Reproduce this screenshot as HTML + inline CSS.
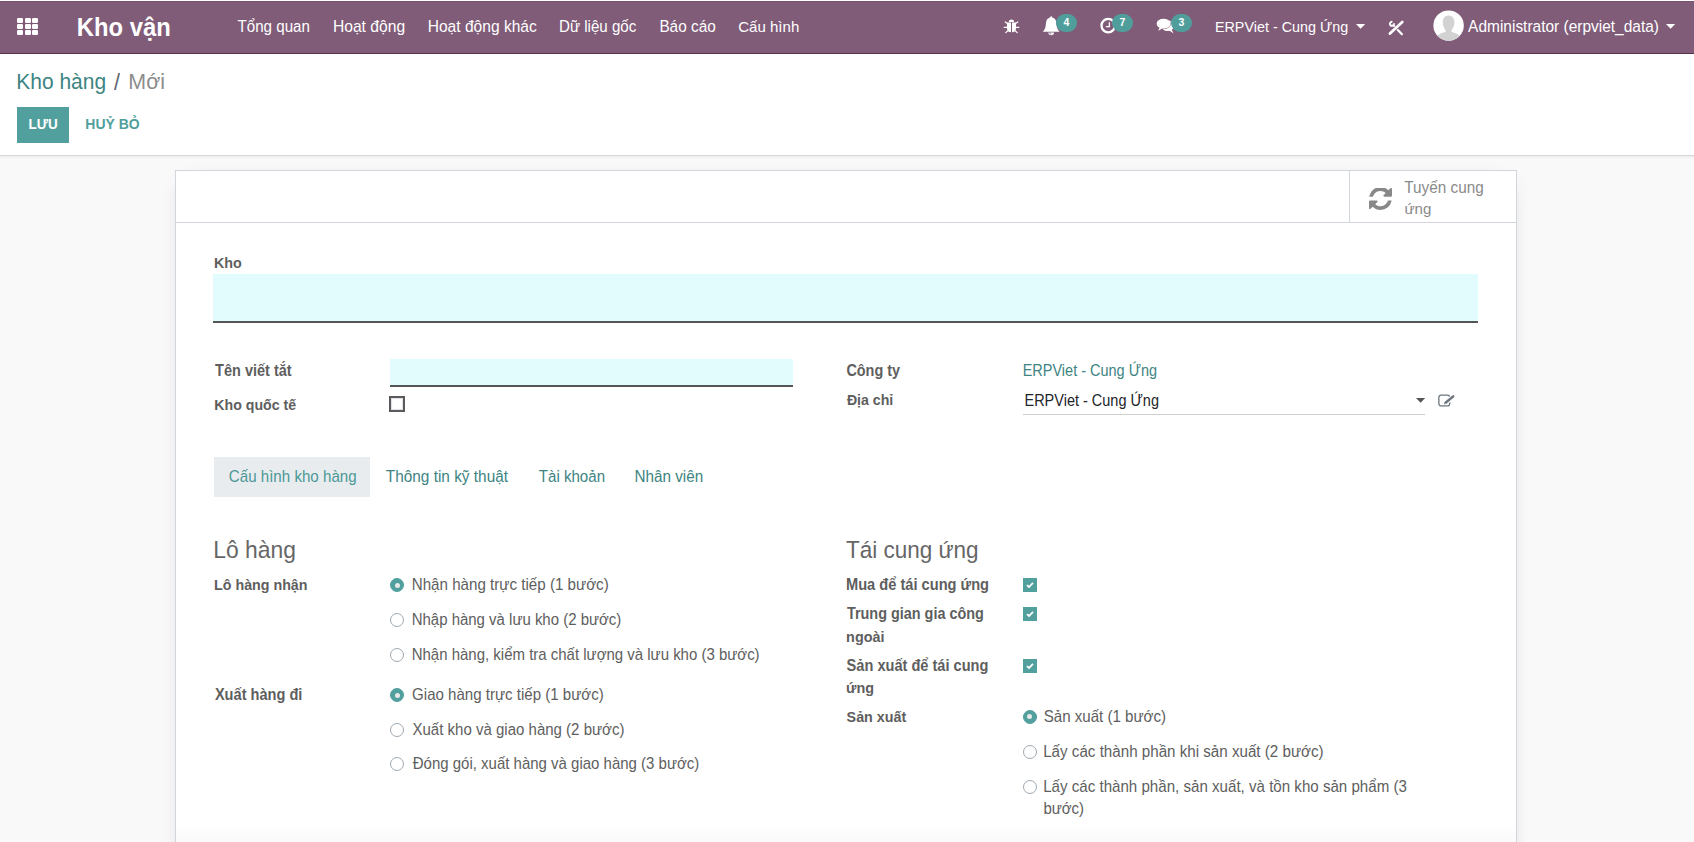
<!DOCTYPE html>
<html lang="vi">
<head>
<meta charset="utf-8">
<title>Kho hàng - Mới</title>
<style>
html,body{margin:0;padding:0;}
body{width:1694px;height:842px;overflow:hidden;position:relative;background:#f9f9f9;font-family:"Liberation Sans",sans-serif;}
.t{position:absolute;white-space:nowrap;line-height:1;font-family:"Liberation Sans",sans-serif;}
.abs{position:absolute;}
#nav{position:absolute;left:0;top:1px;width:1694px;height:51px;background:#805c78;border-top:1px solid #7a5170;border-bottom:1px solid #56324e;box-sizing:content-box;}
#cp{position:absolute;left:0;top:54px;width:1694px;height:101px;background:#fff;border-bottom:1px solid #d6d6d6;}
#cpshadow{position:absolute;left:0;top:156px;width:1694px;height:3px;background:linear-gradient(#ededed,#f9f9f9);}
#sheet{position:absolute;left:175px;top:170px;width:1340px;height:700px;background:#fff;border:1px solid #d1d6dc;box-shadow:0 5px 20px -12px rgba(0,0,0,0.35);}
.badge{position:absolute;width:21px;height:18px;border-radius:9px;background:#4f9e9c;}
.cell{position:absolute;width:6px;height:4.6px;background:#fff;border-radius:1.2px;}
.radio{position:absolute;width:12.4px;height:12.4px;border:1px solid #9fa8b1;border-radius:50%;background:#fff;}
.radio.on{background:#52a09e;border-color:#52a09e;}
.radio.on::after{content:"";position:absolute;left:3.7px;top:3.7px;width:5px;height:5px;border-radius:50%;background:#e8e8e8;}
.chk{position:absolute;width:14px;height:14px;background:#52a09e;}
</style>
</head>
<body>
<div class="abs" style="left:0;top:0;width:1694px;height:1px;background:#fff"></div>
<div id="nav"></div>
<!-- apps grid -->
<div class="cell" style="left:17px;top:18px"></div><div class="cell" style="left:24.5px;top:18px"></div><div class="cell" style="left:32px;top:18px"></div>
<div class="cell" style="left:17px;top:24px"></div><div class="cell" style="left:24.5px;top:24px"></div><div class="cell" style="left:32px;top:24px"></div>
<div class="cell" style="left:17px;top:30.2px"></div><div class="cell" style="left:24.5px;top:30.2px"></div><div class="cell" style="left:32px;top:30.2px"></div>

<!-- bug icon -->
<svg class="abs" style="left:1000px;top:14px" width="24" height="24" viewBox="0 0 24 24">
  <path d="M8.8 8 A2.65 2.6 0 0 1 14.1 8 Z" fill="#fff"/>
  <path d="M7 8.6 H11 V18.2 C8.6 18.2 7 16.8 7 14.2 Z M12 8.6 H16 V14.2 C16 16.8 14.4 18.2 12 18.2 Z" fill="#fff"/>
  <path d="M7.4 9.6 L5.2 8 M15.6 9.6 L17.8 8 M4.2 13.4 H7.2 M15.8 13.4 H18.8 M7.8 16.8 L5.8 18.6 M15.2 16.8 L17.2 18.6" stroke="#fff" stroke-width="1.2" fill="none" stroke-linecap="round"/>
</svg>
<!-- bell -->
<svg class="abs" style="left:1042px;top:16px" width="19" height="20" viewBox="0 0 19 20">
  <circle cx="9.2" cy="1.2" r="1" fill="#fff"/>
  <path d="M9.2 1.4 C6.2 1.4 4.6 3.2 4.2 5.8 L3.6 10.2 C3.2 12.8 2 14.4 0.8 15.7 H17.6 C16.4 14.4 15.2 12.8 14.8 10.2 L14.2 5.8 C13.8 3.2 12.2 1.4 9.2 1.4 Z" fill="#fff"/>
  <path d="M6.4 16.4 A2.8 2.8 0 0 0 12 16.4 Z" fill="#fff"/>
  <path d="M7.6 16.4 A1.6 1.6 0 0 0 9.4 18" stroke="#805c78" stroke-width="0.7" fill="none"/>
</svg>
<div class="badge" style="left:1056px;top:14px"></div>
<!-- clock -->
<svg class="abs" style="left:1100px;top:17px" width="17" height="17" viewBox="0 0 17 17">
  <circle cx="8.2" cy="8.6" r="6.7" stroke="#fff" stroke-width="2.3" fill="none"/>
  <path d="M9.4 5.2 V9.6 H5.9" stroke="#fff" stroke-width="1.3" fill="none"/>
</svg>
<div class="badge" style="left:1112px;top:14px"></div>
<!-- comments -->
<svg class="abs" style="left:1156px;top:18px" width="20" height="18" viewBox="0 0 20 18">
  <ellipse cx="11.6" cy="7.6" rx="6.4" ry="5.4" fill="#fff"/>
  <path d="M12.5 12 L17.6 15.6 L15.4 11 Z" fill="#fff"/>
  <ellipse cx="7.57" cy="5.8" rx="7.3" ry="5.4" fill="#805c78"/>
  <path d="M2 12.9 L3.6 9.4 L6.6 10.6 Z" fill="#805c78" stroke="#805c78" stroke-width="1.2"/>
  <ellipse cx="7.57" cy="5.8" rx="6.95" ry="5.0" fill="#fff"/>
  <path d="M2.2 12.8 L3.6 9.6 L6.4 10.6 Z" fill="#fff"/>
</svg>
<div class="badge" style="left:1171px;top:14px"></div>
<!-- caret company -->
<svg class="abs" style="left:1356px;top:23.5px" width="10" height="5" viewBox="0 0 10 5"><path d="M0 0 H9.2 L4.6 4.8 Z" fill="#fff"/></svg>
<!-- tools -->
<svg class="abs" style="left:1384px;top:16px" width="24" height="24" viewBox="0 0 24 24">
  <path d="M9.6 9.6 L17.9 18.2" stroke="#fff" stroke-width="2.2" stroke-linecap="round" fill="none"/>
  <path d="M9.83 7.28 A2.0 2.0 0 1 1 8.42 5.87" stroke="#fff" stroke-width="1.9" fill="none"/>
  <path d="M5.9 17.6 L18.3 5.9" stroke="#805c78" stroke-width="4" stroke-linecap="round" fill="none"/>
  <path d="M5.9 17.6 L18.3 5.9" stroke="#fff" stroke-width="2.7" stroke-linecap="round" fill="none"/>
  <path d="M4.9 18.9 L5.0 16.8 L7.0 18.6 Z" fill="#fff"/>
</svg>
<!-- avatar -->
<svg class="abs" style="left:1433px;top:10px" width="32" height="32" viewBox="0 0 32 32">
  <defs><clipPath id="avc"><circle cx="15.6" cy="15.6" r="15.2"/></clipPath></defs>
  <circle cx="15.6" cy="15.6" r="15.2" fill="#fff"/>
  <g clip-path="url(#avc)" fill="#d2d2d2">
    <path d="M15.6 5.6 C19.2 5.6 21.4 8.4 21.4 12.6 C21.4 16 20 18.6 18.6 20 L18.6 22 C22 22.8 26.4 24.2 27.6 27 L27.6 34 H3.6 V27 C4.8 24.2 9.2 22.8 12.6 22 L12.6 20 C11.2 18.6 9.8 16 9.8 12.6 C9.8 8.4 12 5.6 15.6 5.6 Z"/>
  </g>
</svg>
<!-- caret user -->
<svg class="abs" style="left:1666px;top:23.5px" width="10" height="5" viewBox="0 0 10 5"><path d="M0 0 H9.2 L4.6 4.8 Z" fill="#fff"/></svg>

<div id="cp"></div>
<div id="cpshadow"></div>
<div class="abs" style="left:17px;top:107px;width:52px;height:36px;background:#52a09e"></div>

<div id="sheet"></div>
<div class="abs" style="left:176px;top:222px;width:1340px;height:1px;background:#d1d6dc"></div>
<div class="abs" style="left:1349px;top:171px;width:1px;height:51px;background:#d1d6dc"></div>
<!-- refresh icon -->
<svg class="abs" style="left:1369px;top:188px" width="23" height="23" viewBox="0 0 1536 1536">
  <g transform="translate(0,-64)">
  <path fill="#888" d="M1511 928q0 5-1 7-64 268-268 434.5t-478 166.5q-146 0-282.5-55t-243.5-157l-129 129q-19 19-45 19t-45-19-19-45v-448q0-26 19-45t45-19h448q26 0 45 19t19 45-19 45l-137 137q71 66 161 102t187 36q134 0 250-65t186-179q11-17 53-117 8-23 30-23h192q13 0 22.5 9.5t9.5 22.5zm25-800v448q0 26-19 45t-45 19h-448q-26 0-45-19t-19-45 19-45l138-138q-148-137-349-137-134 0-250 65t-186 179q-11 17-53 117-8 23-30 23h-199q-13 0-22.5-9.5t-9.5-22.5v-7q65-268 270-434.5t480-166.5q146 0 284 55.5t245 156.5l130-129q19-19 45-19t45 19 19 45z"/>
  </g>
</svg>

<!-- Kho input -->
<div class="abs" style="left:213px;top:274px;width:1265px;height:47px;background:#e2fcfd;border-bottom:2px solid #555"></div>
<!-- Ten viet tat input -->
<div class="abs" style="left:390px;top:359px;width:403px;height:26px;background:#e2fcfd;border-bottom:2px solid #555"></div>
<!-- checkbox empty -->
<div class="abs" style="left:389px;top:396px;width:12px;height:12px;border:2px solid #5a5a5a;box-shadow:inset 0 0 1px 1px #dde2e8;background:#fff"></div>
<!-- dia chi underline + caret + edit -->
<div class="abs" style="left:1023px;top:414px;width:402px;height:1px;background:#cfcfcf"></div>
<svg class="abs" style="left:1416px;top:398px" width="10" height="5" viewBox="0 0 10 5"><path d="M0 0 H9.2 L4.6 4.8 Z" fill="#555"/></svg>
<svg class="abs" style="left:1437px;top:394px" width="18" height="14" viewBox="0 0 18 14">
  <rect x="1.85" y="1.15" width="10.8" height="10.8" rx="2.2" stroke="#6c757d" stroke-width="1.3" fill="none"/>
  <path d="M7.9 9.4 L16.4 2.2" stroke="#fff" stroke-width="4.6" fill="none"/>
  <path d="M8.6 8.8 L16.2 2.4" stroke="#6c757d" stroke-width="2.5" fill="none" stroke-linecap="round"/>
  <path d="M6.8 10.6 L7.6 7.9 L9.5 9.7 Z" fill="#6c757d"/>
  <path d="M7.5 9.9 L7.9 8.7 L8.8 9.5 Z" fill="#fff"/>
</svg>

<!-- tabs -->
<div class="abs" style="left:213.5px;top:457px;width:156.5px;height:39.5px;background:#e9ecef"></div>

<!-- radios -->
<div class="radio on" style="left:390px;top:578px"></div>
<div class="radio" style="left:390px;top:612.8px"></div>
<div class="radio" style="left:390px;top:647.5px"></div>
<div class="radio on" style="left:390px;top:688px"></div>
<div class="radio" style="left:390px;top:722.5px"></div>
<div class="radio" style="left:390px;top:757px"></div>
<div class="radio on" style="left:1022.8px;top:709.8px"></div>
<div class="radio" style="left:1022.8px;top:745px"></div>
<div class="radio" style="left:1022.8px;top:780px"></div>
<!-- checkboxes -->
<div class="chk" style="left:1023px;top:578px"></div>
<div class="chk" style="left:1023px;top:607px"></div>
<div class="chk" style="left:1023px;top:659px"></div>
<svg class="abs" style="left:1023px;top:578px" width="14" height="14" viewBox="0 0 14 14"><path d="M4 7.2 L6 9 L10 4.8" stroke="#fff" stroke-width="1.8" fill="none"/></svg>
<svg class="abs" style="left:1023px;top:607px" width="14" height="14" viewBox="0 0 14 14"><path d="M4 7.2 L6 9 L10 4.8" stroke="#fff" stroke-width="1.8" fill="none"/></svg>
<svg class="abs" style="left:1023px;top:659px" width="14" height="14" viewBox="0 0 14 14"><path d="M4 7.2 L6 9 L10 4.8" stroke="#fff" stroke-width="1.8" fill="none"/></svg>

<span class="t" style="left:76.8px;top:16px;font-size:23.8px;font-weight:700;color:#ffffff;transform:scaleY(1.1);transform-origin:0 20px;">Kho vận</span>
<span class="t" style="left:237.5px;top:19px;font-size:15.15px;color:#ffffff;transform:scaleY(1.03);transform-origin:0 13px;">Tổng quan</span>
<span class="t" style="left:332.9px;top:19px;font-size:15.66px;color:#ffffff;transform:scaleY(1.03);transform-origin:0 13px;">Hoạt động</span>
<span class="t" style="left:427.7px;top:19px;font-size:15.59px;color:#ffffff;transform:scaleY(1.03);transform-origin:0 13px;">Hoạt động khác</span>
<span class="t" style="left:559.0px;top:19px;font-size:15.11px;color:#ffffff;transform:scaleY(1.03);transform-origin:0 13px;">Dữ liệu gốc</span>
<span class="t" style="left:659.4px;top:19px;font-size:15.35px;color:#ffffff;transform:scaleY(1.03);transform-origin:0 13px;">Báo cáo</span>
<span class="t" style="left:738.2px;top:19px;font-size:15.06px;color:#ffffff;transform:scaleY(1.03);transform-origin:0 13px;">Cấu hình</span>
<span class="t" style="left:1214.9px;top:20px;font-size:14.37px;color:#ffffff;transform:scaleY(1.03);transform-origin:0 12px;">ERPViet - Cung Ứng</span>
<span class="t" style="left:1468.1px;top:19px;font-size:15.47px;color:#ffffff;transform:scaleY(1.03);transform-origin:0 13px;">Administrator (erpviet_data)</span>
<span class="t" style="left:1063.6px;top:17px;font-size:10.5px;font-weight:700;color:#ffffff;transform:scaleY(1.03);transform-origin:0 9px;">4</span>
<span class="t" style="left:1119.6px;top:17px;font-size:10.5px;font-weight:700;color:#ffffff;transform:scaleY(1.03);transform-origin:0 9px;">7</span>
<span class="t" style="left:1178.5px;top:17px;font-size:10.5px;font-weight:700;color:#ffffff;transform:scaleY(1.03);transform-origin:0 9px;">3</span>
<span class="t" style="left:16.3px;top:72px;font-size:20.97px;color:#3d8482;transform:scaleY(1.06);transform-origin:0 17px;">Kho hàng</span>
<span class="t" style="left:114.0px;top:73px;font-size:21.5px;color:#5c6470;transform:scaleY(1.08);transform-origin:0 17px;">/</span>
<span class="t" style="left:128.3px;top:72px;font-size:21.41px;color:#8c8c8c;transform:scaleY(1.06);transform-origin:0 17px;">Mới</span>
<span class="t" style="left:28.6px;top:118px;font-size:13.51px;font-weight:700;color:#ffffff;transform:scaleY(1.08);transform-origin:0 11px;">LƯU</span>
<span class="t" style="left:85.3px;top:118px;font-size:13.97px;font-weight:700;color:#4f9f9c;transform:scaleY(1.08);transform-origin:0 11px;">HUỶ BỎ</span>
<span class="t" style="left:1404.3px;top:180px;font-size:15.34px;color:#8a8a8a;transform:scaleY(1.02);transform-origin:0 13px;">Tuyến cung</span>
<span class="t" style="left:1404.4px;top:201px;font-size:15.1px;color:#8a8a8a;transform:scaleY(1.02);transform-origin:0 13px;">ứng</span>
<span class="t" style="left:214.0px;top:256px;font-size:14.31px;font-weight:700;color:#5e5e5e;transform:scaleY(1.08);transform-origin:0 12px;">Kho</span>
<span class="t" style="left:215.1px;top:364px;font-size:14.5px;font-weight:700;color:#5e5e5e;transform:scaleY(1.08);transform-origin:0 12px;">Tên viết tắt</span>
<span class="t" style="left:214.3px;top:398px;font-size:14.17px;font-weight:700;color:#5e5e5e;transform:scaleY(1.08);transform-origin:0 12px;">Kho quốc tế</span>
<span class="t" style="left:846.4px;top:364px;font-size:14.42px;font-weight:700;color:#5e5e5e;transform:scaleY(1.08);transform-origin:0 12px;">Công ty</span>
<span class="t" style="left:1022.7px;top:364px;font-size:14.49px;color:#3d8482;transform:scaleY(1.08);transform-origin:0 12px;">ERPViet - Cung Ứng</span>
<span class="t" style="left:846.9px;top:393px;font-size:14.15px;font-weight:700;color:#5e5e5e;transform:scaleY(1.08);transform-origin:0 12px;">Địa chỉ</span>
<span class="t" style="left:1024.5px;top:394px;font-size:14.49px;color:#212529;transform:scaleY(1.08);transform-origin:0 12px;">ERPViet - Cung Ứng</span>
<span class="t" style="left:228.8px;top:469px;font-size:15.13px;color:#4a9896;transform:scaleY(1.08);transform-origin:0 13px;">Cấu hình kho hàng</span>
<span class="t" style="left:385.8px;top:469px;font-size:15.38px;color:#3d8482;transform:scaleY(1.08);transform-origin:0 13px;">Thông tin kỹ thuật</span>
<span class="t" style="left:538.8px;top:469px;font-size:15.08px;color:#3d8482;transform:scaleY(1.08);transform-origin:0 13px;">Tài khoản</span>
<span class="t" style="left:634.5px;top:469px;font-size:15.28px;color:#3d8482;transform:scaleY(1.08);transform-origin:0 13px;">Nhân viên</span>
<span class="t" style="left:213.2px;top:539px;font-size:22.88px;color:#666666;transform:scaleY(1.04);transform-origin:0 19px;">Lô hàng</span>
<span class="t" style="left:845.9px;top:540px;font-size:22.53px;color:#666666;transform:scaleY(1.08);transform-origin:0 18px;">Tái cung ứng</span>
<span class="t" style="left:214.1px;top:578px;font-size:14.25px;font-weight:700;color:#5e5e5e;transform:scaleY(1.08);transform-origin:0 12px;">Lô hàng nhận</span>
<span class="t" style="left:214.9px;top:688px;font-size:14.59px;font-weight:700;color:#5e5e5e;transform:scaleY(1.08);transform-origin:0 12px;">Xuất hàng đi</span>
<span class="t" style="left:411.7px;top:577px;font-size:15.16px;color:#5e5e5e;transform:scaleY(1.08);transform-origin:0 13px;">Nhận hàng trực tiếp (1 bước)</span>
<span class="t" style="left:411.7px;top:612px;font-size:14.98px;color:#5e5e5e;transform:scaleY(1.08);transform-origin:0 13px;">Nhập hàng và lưu kho (2 bước)</span>
<span class="t" style="left:411.7px;top:647px;font-size:14.99px;color:#5e5e5e;transform:scaleY(1.08);transform-origin:0 13px;">Nhận hàng, kiểm tra chất lượng và lưu kho (3 bước)</span>
<span class="t" style="left:412.1px;top:687px;font-size:15.07px;color:#5e5e5e;transform:scaleY(1.08);transform-origin:0 13px;">Giao hàng trực tiếp (1 bước)</span>
<span class="t" style="left:412.5px;top:722px;font-size:15.02px;color:#5e5e5e;transform:scaleY(1.08);transform-origin:0 13px;">Xuất kho và giao hàng (2 bước)</span>
<span class="t" style="left:412.8px;top:756px;font-size:14.99px;color:#5e5e5e;transform:scaleY(1.08);transform-origin:0 13px;">Đóng gói, xuất hàng và giao hàng (3 bước)</span>
<span class="t" style="left:846.0px;top:578px;font-size:14.64px;font-weight:700;color:#5e5e5e;transform:scaleY(1.08);transform-origin:0 12px;">Mua để tái cung ứng</span>
<span class="t" style="left:846.9px;top:607px;font-size:14.43px;font-weight:700;color:#5e5e5e;transform:scaleY(1.08);transform-origin:0 12px;">Trung gian gia công</span>
<span class="t" style="left:846.1px;top:630px;font-size:14.4px;font-weight:700;color:#5e5e5e;transform:scaleY(1.08);transform-origin:0 12px;">ngoài</span>
<span class="t" style="left:846.6px;top:659px;font-size:14.59px;font-weight:700;color:#5e5e5e;transform:scaleY(1.08);transform-origin:0 12px;">Sản xuất để tái cung</span>
<span class="t" style="left:846.1px;top:681px;font-size:14.4px;font-weight:700;color:#5e5e5e;transform:scaleY(1.08);transform-origin:0 12px;">ứng</span>
<span class="t" style="left:846.6px;top:710px;font-size:14.3px;font-weight:700;color:#5e5e5e;transform:scaleY(1.08);transform-origin:0 12px;">Sản xuất</span>
<span class="t" style="left:1043.7px;top:709px;font-size:15.1px;color:#5e5e5e;transform:scaleY(1.08);transform-origin:0 13px;">Sản xuất (1 bước)</span>
<span class="t" style="left:1043.2px;top:744px;font-size:15.17px;color:#5e5e5e;transform:scaleY(1.08);transform-origin:0 13px;">Lấy các thành phần khi sản xuất (2 bước)</span>
<span class="t" style="left:1043.2px;top:779px;font-size:15.12px;color:#5e5e5e;transform:scaleY(1.08);transform-origin:0 13px;">Lấy các thành phần, sản xuất, và tồn kho sản phẩm (3</span>
<span class="t" style="left:1043.4px;top:801px;font-size:15.0px;color:#5e5e5e;transform:scaleY(1.08);transform-origin:0 13px;">bước)</span>
<div class="abs" style="left:176px;top:824px;width:1340px;height:18px;background:linear-gradient(rgba(0,0,0,0),rgba(0,0,0,0.02))"></div>
</body>
</html>
